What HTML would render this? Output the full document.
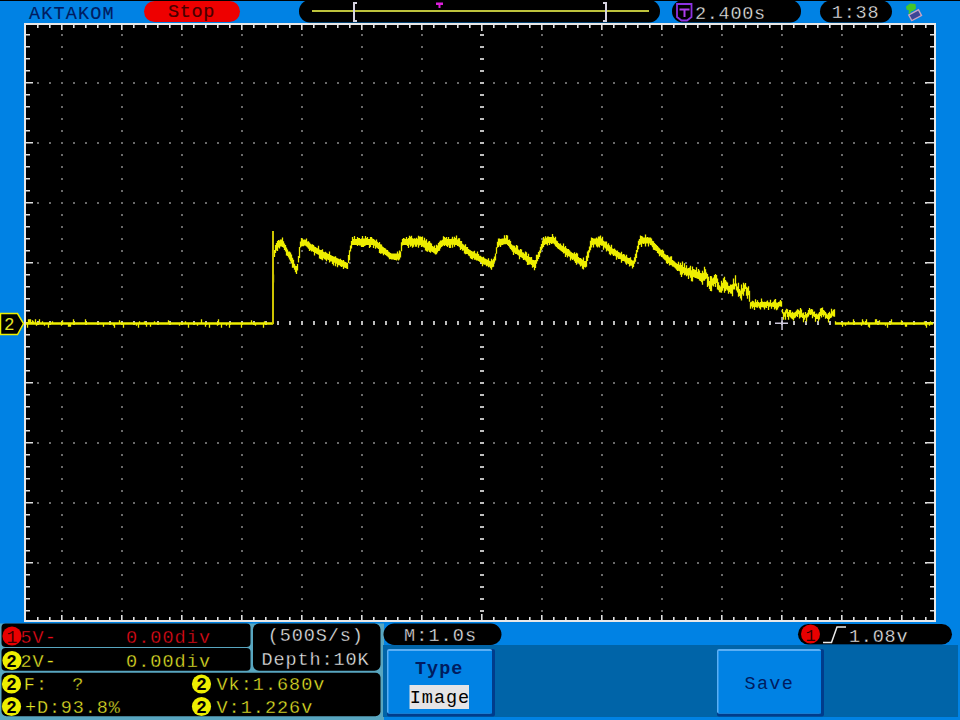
<!DOCTYPE html>
<html><head><meta charset="utf-8"><title>AKTAKOM oscilloscope</title>
<style>html,body{margin:0;padding:0;background:rgb(0,130,228);width:960px;height:720px;overflow:hidden}svg{display:block}</style>
</head><body>
<svg width="960" height="720" viewBox="0 0 960 720">
<rect width="960" height="720" fill="rgb(0,130,228)"/>
<rect x="0" y="0" width="960" height="1" fill="#000"/>
<rect x="24" y="23" width="912" height="599" fill="#e8e8e8"/>
<rect x="26" y="25" width="908" height="595" fill="#000"/>
<path d="M61 34h2v2h-2zM61 46h2v2h-2zM61 58h2v2h-2zM61 70h2v2h-2zM61 82h2v2h-2zM61 94h2v2h-2zM61 106h2v2h-2zM61 118h2v2h-2zM61 130h2v2h-2zM61 142h2v2h-2zM61 154h2v2h-2zM61 166h2v2h-2zM61 178h2v2h-2zM61 190h2v2h-2zM61 202h2v2h-2zM61 214h2v2h-2zM61 226h2v2h-2zM61 238h2v2h-2zM61 250h2v2h-2zM61 262h2v2h-2zM61 274h2v2h-2zM61 286h2v2h-2zM61 298h2v2h-2zM61 310h2v2h-2zM61 322h2v2h-2zM61 334h2v2h-2zM61 346h2v2h-2zM61 358h2v2h-2zM61 370h2v2h-2zM61 382h2v2h-2zM61 394h2v2h-2zM61 406h2v2h-2zM61 418h2v2h-2zM61 430h2v2h-2zM61 442h2v2h-2zM61 454h2v2h-2zM61 466h2v2h-2zM61 478h2v2h-2zM61 490h2v2h-2zM61 502h2v2h-2zM61 514h2v2h-2zM61 526h2v2h-2zM61 538h2v2h-2zM61 550h2v2h-2zM61 562h2v2h-2zM61 574h2v2h-2zM61 586h2v2h-2zM61 598h2v2h-2zM61 610h2v2h-2zM121 34h2v2h-2zM121 46h2v2h-2zM121 58h2v2h-2zM121 70h2v2h-2zM121 82h2v2h-2zM121 94h2v2h-2zM121 106h2v2h-2zM121 118h2v2h-2zM121 130h2v2h-2zM121 142h2v2h-2zM121 154h2v2h-2zM121 166h2v2h-2zM121 178h2v2h-2zM121 190h2v2h-2zM121 202h2v2h-2zM121 214h2v2h-2zM121 226h2v2h-2zM121 238h2v2h-2zM121 250h2v2h-2zM121 262h2v2h-2zM121 274h2v2h-2zM121 286h2v2h-2zM121 298h2v2h-2zM121 310h2v2h-2zM121 322h2v2h-2zM121 334h2v2h-2zM121 346h2v2h-2zM121 358h2v2h-2zM121 370h2v2h-2zM121 382h2v2h-2zM121 394h2v2h-2zM121 406h2v2h-2zM121 418h2v2h-2zM121 430h2v2h-2zM121 442h2v2h-2zM121 454h2v2h-2zM121 466h2v2h-2zM121 478h2v2h-2zM121 490h2v2h-2zM121 502h2v2h-2zM121 514h2v2h-2zM121 526h2v2h-2zM121 538h2v2h-2zM121 550h2v2h-2zM121 562h2v2h-2zM121 574h2v2h-2zM121 586h2v2h-2zM121 598h2v2h-2zM121 610h2v2h-2zM181 34h2v2h-2zM181 46h2v2h-2zM181 58h2v2h-2zM181 70h2v2h-2zM181 82h2v2h-2zM181 94h2v2h-2zM181 106h2v2h-2zM181 118h2v2h-2zM181 130h2v2h-2zM181 142h2v2h-2zM181 154h2v2h-2zM181 166h2v2h-2zM181 178h2v2h-2zM181 190h2v2h-2zM181 202h2v2h-2zM181 214h2v2h-2zM181 226h2v2h-2zM181 238h2v2h-2zM181 250h2v2h-2zM181 262h2v2h-2zM181 274h2v2h-2zM181 286h2v2h-2zM181 298h2v2h-2zM181 310h2v2h-2zM181 322h2v2h-2zM181 334h2v2h-2zM181 346h2v2h-2zM181 358h2v2h-2zM181 370h2v2h-2zM181 382h2v2h-2zM181 394h2v2h-2zM181 406h2v2h-2zM181 418h2v2h-2zM181 430h2v2h-2zM181 442h2v2h-2zM181 454h2v2h-2zM181 466h2v2h-2zM181 478h2v2h-2zM181 490h2v2h-2zM181 502h2v2h-2zM181 514h2v2h-2zM181 526h2v2h-2zM181 538h2v2h-2zM181 550h2v2h-2zM181 562h2v2h-2zM181 574h2v2h-2zM181 586h2v2h-2zM181 598h2v2h-2zM181 610h2v2h-2zM241 34h2v2h-2zM241 46h2v2h-2zM241 58h2v2h-2zM241 70h2v2h-2zM241 82h2v2h-2zM241 94h2v2h-2zM241 106h2v2h-2zM241 118h2v2h-2zM241 130h2v2h-2zM241 142h2v2h-2zM241 154h2v2h-2zM241 166h2v2h-2zM241 178h2v2h-2zM241 190h2v2h-2zM241 202h2v2h-2zM241 214h2v2h-2zM241 226h2v2h-2zM241 238h2v2h-2zM241 250h2v2h-2zM241 262h2v2h-2zM241 274h2v2h-2zM241 286h2v2h-2zM241 298h2v2h-2zM241 310h2v2h-2zM241 322h2v2h-2zM241 334h2v2h-2zM241 346h2v2h-2zM241 358h2v2h-2zM241 370h2v2h-2zM241 382h2v2h-2zM241 394h2v2h-2zM241 406h2v2h-2zM241 418h2v2h-2zM241 430h2v2h-2zM241 442h2v2h-2zM241 454h2v2h-2zM241 466h2v2h-2zM241 478h2v2h-2zM241 490h2v2h-2zM241 502h2v2h-2zM241 514h2v2h-2zM241 526h2v2h-2zM241 538h2v2h-2zM241 550h2v2h-2zM241 562h2v2h-2zM241 574h2v2h-2zM241 586h2v2h-2zM241 598h2v2h-2zM241 610h2v2h-2zM301 34h2v2h-2zM301 46h2v2h-2zM301 58h2v2h-2zM301 70h2v2h-2zM301 82h2v2h-2zM301 94h2v2h-2zM301 106h2v2h-2zM301 118h2v2h-2zM301 130h2v2h-2zM301 142h2v2h-2zM301 154h2v2h-2zM301 166h2v2h-2zM301 178h2v2h-2zM301 190h2v2h-2zM301 202h2v2h-2zM301 214h2v2h-2zM301 226h2v2h-2zM301 238h2v2h-2zM301 250h2v2h-2zM301 262h2v2h-2zM301 274h2v2h-2zM301 286h2v2h-2zM301 298h2v2h-2zM301 310h2v2h-2zM301 322h2v2h-2zM301 334h2v2h-2zM301 346h2v2h-2zM301 358h2v2h-2zM301 370h2v2h-2zM301 382h2v2h-2zM301 394h2v2h-2zM301 406h2v2h-2zM301 418h2v2h-2zM301 430h2v2h-2zM301 442h2v2h-2zM301 454h2v2h-2zM301 466h2v2h-2zM301 478h2v2h-2zM301 490h2v2h-2zM301 502h2v2h-2zM301 514h2v2h-2zM301 526h2v2h-2zM301 538h2v2h-2zM301 550h2v2h-2zM301 562h2v2h-2zM301 574h2v2h-2zM301 586h2v2h-2zM301 598h2v2h-2zM301 610h2v2h-2zM361 34h2v2h-2zM361 46h2v2h-2zM361 58h2v2h-2zM361 70h2v2h-2zM361 82h2v2h-2zM361 94h2v2h-2zM361 106h2v2h-2zM361 118h2v2h-2zM361 130h2v2h-2zM361 142h2v2h-2zM361 154h2v2h-2zM361 166h2v2h-2zM361 178h2v2h-2zM361 190h2v2h-2zM361 202h2v2h-2zM361 214h2v2h-2zM361 226h2v2h-2zM361 238h2v2h-2zM361 250h2v2h-2zM361 262h2v2h-2zM361 274h2v2h-2zM361 286h2v2h-2zM361 298h2v2h-2zM361 310h2v2h-2zM361 322h2v2h-2zM361 334h2v2h-2zM361 346h2v2h-2zM361 358h2v2h-2zM361 370h2v2h-2zM361 382h2v2h-2zM361 394h2v2h-2zM361 406h2v2h-2zM361 418h2v2h-2zM361 430h2v2h-2zM361 442h2v2h-2zM361 454h2v2h-2zM361 466h2v2h-2zM361 478h2v2h-2zM361 490h2v2h-2zM361 502h2v2h-2zM361 514h2v2h-2zM361 526h2v2h-2zM361 538h2v2h-2zM361 550h2v2h-2zM361 562h2v2h-2zM361 574h2v2h-2zM361 586h2v2h-2zM361 598h2v2h-2zM361 610h2v2h-2zM421 34h2v2h-2zM421 46h2v2h-2zM421 58h2v2h-2zM421 70h2v2h-2zM421 82h2v2h-2zM421 94h2v2h-2zM421 106h2v2h-2zM421 118h2v2h-2zM421 130h2v2h-2zM421 142h2v2h-2zM421 154h2v2h-2zM421 166h2v2h-2zM421 178h2v2h-2zM421 190h2v2h-2zM421 202h2v2h-2zM421 214h2v2h-2zM421 226h2v2h-2zM421 238h2v2h-2zM421 250h2v2h-2zM421 262h2v2h-2zM421 274h2v2h-2zM421 286h2v2h-2zM421 298h2v2h-2zM421 310h2v2h-2zM421 322h2v2h-2zM421 334h2v2h-2zM421 346h2v2h-2zM421 358h2v2h-2zM421 370h2v2h-2zM421 382h2v2h-2zM421 394h2v2h-2zM421 406h2v2h-2zM421 418h2v2h-2zM421 430h2v2h-2zM421 442h2v2h-2zM421 454h2v2h-2zM421 466h2v2h-2zM421 478h2v2h-2zM421 490h2v2h-2zM421 502h2v2h-2zM421 514h2v2h-2zM421 526h2v2h-2zM421 538h2v2h-2zM421 550h2v2h-2zM421 562h2v2h-2zM421 574h2v2h-2zM421 586h2v2h-2zM421 598h2v2h-2zM421 610h2v2h-2zM541 34h2v2h-2zM541 46h2v2h-2zM541 58h2v2h-2zM541 70h2v2h-2zM541 82h2v2h-2zM541 94h2v2h-2zM541 106h2v2h-2zM541 118h2v2h-2zM541 130h2v2h-2zM541 142h2v2h-2zM541 154h2v2h-2zM541 166h2v2h-2zM541 178h2v2h-2zM541 190h2v2h-2zM541 202h2v2h-2zM541 214h2v2h-2zM541 226h2v2h-2zM541 238h2v2h-2zM541 250h2v2h-2zM541 262h2v2h-2zM541 274h2v2h-2zM541 286h2v2h-2zM541 298h2v2h-2zM541 310h2v2h-2zM541 322h2v2h-2zM541 334h2v2h-2zM541 346h2v2h-2zM541 358h2v2h-2zM541 370h2v2h-2zM541 382h2v2h-2zM541 394h2v2h-2zM541 406h2v2h-2zM541 418h2v2h-2zM541 430h2v2h-2zM541 442h2v2h-2zM541 454h2v2h-2zM541 466h2v2h-2zM541 478h2v2h-2zM541 490h2v2h-2zM541 502h2v2h-2zM541 514h2v2h-2zM541 526h2v2h-2zM541 538h2v2h-2zM541 550h2v2h-2zM541 562h2v2h-2zM541 574h2v2h-2zM541 586h2v2h-2zM541 598h2v2h-2zM541 610h2v2h-2zM601 34h2v2h-2zM601 46h2v2h-2zM601 58h2v2h-2zM601 70h2v2h-2zM601 82h2v2h-2zM601 94h2v2h-2zM601 106h2v2h-2zM601 118h2v2h-2zM601 130h2v2h-2zM601 142h2v2h-2zM601 154h2v2h-2zM601 166h2v2h-2zM601 178h2v2h-2zM601 190h2v2h-2zM601 202h2v2h-2zM601 214h2v2h-2zM601 226h2v2h-2zM601 238h2v2h-2zM601 250h2v2h-2zM601 262h2v2h-2zM601 274h2v2h-2zM601 286h2v2h-2zM601 298h2v2h-2zM601 310h2v2h-2zM601 322h2v2h-2zM601 334h2v2h-2zM601 346h2v2h-2zM601 358h2v2h-2zM601 370h2v2h-2zM601 382h2v2h-2zM601 394h2v2h-2zM601 406h2v2h-2zM601 418h2v2h-2zM601 430h2v2h-2zM601 442h2v2h-2zM601 454h2v2h-2zM601 466h2v2h-2zM601 478h2v2h-2zM601 490h2v2h-2zM601 502h2v2h-2zM601 514h2v2h-2zM601 526h2v2h-2zM601 538h2v2h-2zM601 550h2v2h-2zM601 562h2v2h-2zM601 574h2v2h-2zM601 586h2v2h-2zM601 598h2v2h-2zM601 610h2v2h-2zM661 34h2v2h-2zM661 46h2v2h-2zM661 58h2v2h-2zM661 70h2v2h-2zM661 82h2v2h-2zM661 94h2v2h-2zM661 106h2v2h-2zM661 118h2v2h-2zM661 130h2v2h-2zM661 142h2v2h-2zM661 154h2v2h-2zM661 166h2v2h-2zM661 178h2v2h-2zM661 190h2v2h-2zM661 202h2v2h-2zM661 214h2v2h-2zM661 226h2v2h-2zM661 238h2v2h-2zM661 250h2v2h-2zM661 262h2v2h-2zM661 274h2v2h-2zM661 286h2v2h-2zM661 298h2v2h-2zM661 310h2v2h-2zM661 322h2v2h-2zM661 334h2v2h-2zM661 346h2v2h-2zM661 358h2v2h-2zM661 370h2v2h-2zM661 382h2v2h-2zM661 394h2v2h-2zM661 406h2v2h-2zM661 418h2v2h-2zM661 430h2v2h-2zM661 442h2v2h-2zM661 454h2v2h-2zM661 466h2v2h-2zM661 478h2v2h-2zM661 490h2v2h-2zM661 502h2v2h-2zM661 514h2v2h-2zM661 526h2v2h-2zM661 538h2v2h-2zM661 550h2v2h-2zM661 562h2v2h-2zM661 574h2v2h-2zM661 586h2v2h-2zM661 598h2v2h-2zM661 610h2v2h-2zM721 34h2v2h-2zM721 46h2v2h-2zM721 58h2v2h-2zM721 70h2v2h-2zM721 82h2v2h-2zM721 94h2v2h-2zM721 106h2v2h-2zM721 118h2v2h-2zM721 130h2v2h-2zM721 142h2v2h-2zM721 154h2v2h-2zM721 166h2v2h-2zM721 178h2v2h-2zM721 190h2v2h-2zM721 202h2v2h-2zM721 214h2v2h-2zM721 226h2v2h-2zM721 238h2v2h-2zM721 250h2v2h-2zM721 262h2v2h-2zM721 274h2v2h-2zM721 286h2v2h-2zM721 298h2v2h-2zM721 310h2v2h-2zM721 322h2v2h-2zM721 334h2v2h-2zM721 346h2v2h-2zM721 358h2v2h-2zM721 370h2v2h-2zM721 382h2v2h-2zM721 394h2v2h-2zM721 406h2v2h-2zM721 418h2v2h-2zM721 430h2v2h-2zM721 442h2v2h-2zM721 454h2v2h-2zM721 466h2v2h-2zM721 478h2v2h-2zM721 490h2v2h-2zM721 502h2v2h-2zM721 514h2v2h-2zM721 526h2v2h-2zM721 538h2v2h-2zM721 550h2v2h-2zM721 562h2v2h-2zM721 574h2v2h-2zM721 586h2v2h-2zM721 598h2v2h-2zM721 610h2v2h-2zM781 34h2v2h-2zM781 46h2v2h-2zM781 58h2v2h-2zM781 70h2v2h-2zM781 82h2v2h-2zM781 94h2v2h-2zM781 106h2v2h-2zM781 118h2v2h-2zM781 130h2v2h-2zM781 142h2v2h-2zM781 154h2v2h-2zM781 166h2v2h-2zM781 178h2v2h-2zM781 190h2v2h-2zM781 202h2v2h-2zM781 214h2v2h-2zM781 226h2v2h-2zM781 238h2v2h-2zM781 250h2v2h-2zM781 262h2v2h-2zM781 274h2v2h-2zM781 286h2v2h-2zM781 298h2v2h-2zM781 310h2v2h-2zM781 322h2v2h-2zM781 334h2v2h-2zM781 346h2v2h-2zM781 358h2v2h-2zM781 370h2v2h-2zM781 382h2v2h-2zM781 394h2v2h-2zM781 406h2v2h-2zM781 418h2v2h-2zM781 430h2v2h-2zM781 442h2v2h-2zM781 454h2v2h-2zM781 466h2v2h-2zM781 478h2v2h-2zM781 490h2v2h-2zM781 502h2v2h-2zM781 514h2v2h-2zM781 526h2v2h-2zM781 538h2v2h-2zM781 550h2v2h-2zM781 562h2v2h-2zM781 574h2v2h-2zM781 586h2v2h-2zM781 598h2v2h-2zM781 610h2v2h-2zM841 34h2v2h-2zM841 46h2v2h-2zM841 58h2v2h-2zM841 70h2v2h-2zM841 82h2v2h-2zM841 94h2v2h-2zM841 106h2v2h-2zM841 118h2v2h-2zM841 130h2v2h-2zM841 142h2v2h-2zM841 154h2v2h-2zM841 166h2v2h-2zM841 178h2v2h-2zM841 190h2v2h-2zM841 202h2v2h-2zM841 214h2v2h-2zM841 226h2v2h-2zM841 238h2v2h-2zM841 250h2v2h-2zM841 262h2v2h-2zM841 274h2v2h-2zM841 286h2v2h-2zM841 298h2v2h-2zM841 310h2v2h-2zM841 322h2v2h-2zM841 334h2v2h-2zM841 346h2v2h-2zM841 358h2v2h-2zM841 370h2v2h-2zM841 382h2v2h-2zM841 394h2v2h-2zM841 406h2v2h-2zM841 418h2v2h-2zM841 430h2v2h-2zM841 442h2v2h-2zM841 454h2v2h-2zM841 466h2v2h-2zM841 478h2v2h-2zM841 490h2v2h-2zM841 502h2v2h-2zM841 514h2v2h-2zM841 526h2v2h-2zM841 538h2v2h-2zM841 550h2v2h-2zM841 562h2v2h-2zM841 574h2v2h-2zM841 586h2v2h-2zM841 598h2v2h-2zM841 610h2v2h-2zM901 34h2v2h-2zM901 46h2v2h-2zM901 58h2v2h-2zM901 70h2v2h-2zM901 82h2v2h-2zM901 94h2v2h-2zM901 106h2v2h-2zM901 118h2v2h-2zM901 130h2v2h-2zM901 142h2v2h-2zM901 154h2v2h-2zM901 166h2v2h-2zM901 178h2v2h-2zM901 190h2v2h-2zM901 202h2v2h-2zM901 214h2v2h-2zM901 226h2v2h-2zM901 238h2v2h-2zM901 250h2v2h-2zM901 262h2v2h-2zM901 274h2v2h-2zM901 286h2v2h-2zM901 298h2v2h-2zM901 310h2v2h-2zM901 322h2v2h-2zM901 334h2v2h-2zM901 346h2v2h-2zM901 358h2v2h-2zM901 370h2v2h-2zM901 382h2v2h-2zM901 394h2v2h-2zM901 406h2v2h-2zM901 418h2v2h-2zM901 430h2v2h-2zM901 442h2v2h-2zM901 454h2v2h-2zM901 466h2v2h-2zM901 478h2v2h-2zM901 490h2v2h-2zM901 502h2v2h-2zM901 514h2v2h-2zM901 526h2v2h-2zM901 538h2v2h-2zM901 550h2v2h-2zM901 562h2v2h-2zM901 574h2v2h-2zM901 586h2v2h-2zM901 598h2v2h-2zM901 610h2v2h-2zM37 82h2v2h-2zM49 82h2v2h-2zM61 82h2v2h-2zM73 82h2v2h-2zM85 82h2v2h-2zM97 82h2v2h-2zM109 82h2v2h-2zM121 82h2v2h-2zM133 82h2v2h-2zM145 82h2v2h-2zM157 82h2v2h-2zM169 82h2v2h-2zM181 82h2v2h-2zM193 82h2v2h-2zM205 82h2v2h-2zM217 82h2v2h-2zM229 82h2v2h-2zM241 82h2v2h-2zM253 82h2v2h-2zM265 82h2v2h-2zM277 82h2v2h-2zM289 82h2v2h-2zM301 82h2v2h-2zM313 82h2v2h-2zM325 82h2v2h-2zM337 82h2v2h-2zM349 82h2v2h-2zM361 82h2v2h-2zM373 82h2v2h-2zM385 82h2v2h-2zM397 82h2v2h-2zM409 82h2v2h-2zM421 82h2v2h-2zM433 82h2v2h-2zM445 82h2v2h-2zM457 82h2v2h-2zM469 82h2v2h-2zM481 82h2v2h-2zM493 82h2v2h-2zM505 82h2v2h-2zM517 82h2v2h-2zM529 82h2v2h-2zM541 82h2v2h-2zM553 82h2v2h-2zM565 82h2v2h-2zM577 82h2v2h-2zM589 82h2v2h-2zM601 82h2v2h-2zM613 82h2v2h-2zM625 82h2v2h-2zM637 82h2v2h-2zM649 82h2v2h-2zM661 82h2v2h-2zM673 82h2v2h-2zM685 82h2v2h-2zM697 82h2v2h-2zM709 82h2v2h-2zM721 82h2v2h-2zM733 82h2v2h-2zM745 82h2v2h-2zM757 82h2v2h-2zM769 82h2v2h-2zM781 82h2v2h-2zM793 82h2v2h-2zM805 82h2v2h-2zM817 82h2v2h-2zM829 82h2v2h-2zM841 82h2v2h-2zM853 82h2v2h-2zM865 82h2v2h-2zM877 82h2v2h-2zM889 82h2v2h-2zM901 82h2v2h-2zM913 82h2v2h-2zM925 82h2v2h-2zM37 142h2v2h-2zM49 142h2v2h-2zM61 142h2v2h-2zM73 142h2v2h-2zM85 142h2v2h-2zM97 142h2v2h-2zM109 142h2v2h-2zM121 142h2v2h-2zM133 142h2v2h-2zM145 142h2v2h-2zM157 142h2v2h-2zM169 142h2v2h-2zM181 142h2v2h-2zM193 142h2v2h-2zM205 142h2v2h-2zM217 142h2v2h-2zM229 142h2v2h-2zM241 142h2v2h-2zM253 142h2v2h-2zM265 142h2v2h-2zM277 142h2v2h-2zM289 142h2v2h-2zM301 142h2v2h-2zM313 142h2v2h-2zM325 142h2v2h-2zM337 142h2v2h-2zM349 142h2v2h-2zM361 142h2v2h-2zM373 142h2v2h-2zM385 142h2v2h-2zM397 142h2v2h-2zM409 142h2v2h-2zM421 142h2v2h-2zM433 142h2v2h-2zM445 142h2v2h-2zM457 142h2v2h-2zM469 142h2v2h-2zM481 142h2v2h-2zM493 142h2v2h-2zM505 142h2v2h-2zM517 142h2v2h-2zM529 142h2v2h-2zM541 142h2v2h-2zM553 142h2v2h-2zM565 142h2v2h-2zM577 142h2v2h-2zM589 142h2v2h-2zM601 142h2v2h-2zM613 142h2v2h-2zM625 142h2v2h-2zM637 142h2v2h-2zM649 142h2v2h-2zM661 142h2v2h-2zM673 142h2v2h-2zM685 142h2v2h-2zM697 142h2v2h-2zM709 142h2v2h-2zM721 142h2v2h-2zM733 142h2v2h-2zM745 142h2v2h-2zM757 142h2v2h-2zM769 142h2v2h-2zM781 142h2v2h-2zM793 142h2v2h-2zM805 142h2v2h-2zM817 142h2v2h-2zM829 142h2v2h-2zM841 142h2v2h-2zM853 142h2v2h-2zM865 142h2v2h-2zM877 142h2v2h-2zM889 142h2v2h-2zM901 142h2v2h-2zM913 142h2v2h-2zM925 142h2v2h-2zM37 202h2v2h-2zM49 202h2v2h-2zM61 202h2v2h-2zM73 202h2v2h-2zM85 202h2v2h-2zM97 202h2v2h-2zM109 202h2v2h-2zM121 202h2v2h-2zM133 202h2v2h-2zM145 202h2v2h-2zM157 202h2v2h-2zM169 202h2v2h-2zM181 202h2v2h-2zM193 202h2v2h-2zM205 202h2v2h-2zM217 202h2v2h-2zM229 202h2v2h-2zM241 202h2v2h-2zM253 202h2v2h-2zM265 202h2v2h-2zM277 202h2v2h-2zM289 202h2v2h-2zM301 202h2v2h-2zM313 202h2v2h-2zM325 202h2v2h-2zM337 202h2v2h-2zM349 202h2v2h-2zM361 202h2v2h-2zM373 202h2v2h-2zM385 202h2v2h-2zM397 202h2v2h-2zM409 202h2v2h-2zM421 202h2v2h-2zM433 202h2v2h-2zM445 202h2v2h-2zM457 202h2v2h-2zM469 202h2v2h-2zM481 202h2v2h-2zM493 202h2v2h-2zM505 202h2v2h-2zM517 202h2v2h-2zM529 202h2v2h-2zM541 202h2v2h-2zM553 202h2v2h-2zM565 202h2v2h-2zM577 202h2v2h-2zM589 202h2v2h-2zM601 202h2v2h-2zM613 202h2v2h-2zM625 202h2v2h-2zM637 202h2v2h-2zM649 202h2v2h-2zM661 202h2v2h-2zM673 202h2v2h-2zM685 202h2v2h-2zM697 202h2v2h-2zM709 202h2v2h-2zM721 202h2v2h-2zM733 202h2v2h-2zM745 202h2v2h-2zM757 202h2v2h-2zM769 202h2v2h-2zM781 202h2v2h-2zM793 202h2v2h-2zM805 202h2v2h-2zM817 202h2v2h-2zM829 202h2v2h-2zM841 202h2v2h-2zM853 202h2v2h-2zM865 202h2v2h-2zM877 202h2v2h-2zM889 202h2v2h-2zM901 202h2v2h-2zM913 202h2v2h-2zM925 202h2v2h-2zM37 262h2v2h-2zM49 262h2v2h-2zM61 262h2v2h-2zM73 262h2v2h-2zM85 262h2v2h-2zM97 262h2v2h-2zM109 262h2v2h-2zM121 262h2v2h-2zM133 262h2v2h-2zM145 262h2v2h-2zM157 262h2v2h-2zM169 262h2v2h-2zM181 262h2v2h-2zM193 262h2v2h-2zM205 262h2v2h-2zM217 262h2v2h-2zM229 262h2v2h-2zM241 262h2v2h-2zM253 262h2v2h-2zM265 262h2v2h-2zM277 262h2v2h-2zM289 262h2v2h-2zM301 262h2v2h-2zM313 262h2v2h-2zM325 262h2v2h-2zM337 262h2v2h-2zM349 262h2v2h-2zM361 262h2v2h-2zM373 262h2v2h-2zM385 262h2v2h-2zM397 262h2v2h-2zM409 262h2v2h-2zM421 262h2v2h-2zM433 262h2v2h-2zM445 262h2v2h-2zM457 262h2v2h-2zM469 262h2v2h-2zM481 262h2v2h-2zM493 262h2v2h-2zM505 262h2v2h-2zM517 262h2v2h-2zM529 262h2v2h-2zM541 262h2v2h-2zM553 262h2v2h-2zM565 262h2v2h-2zM577 262h2v2h-2zM589 262h2v2h-2zM601 262h2v2h-2zM613 262h2v2h-2zM625 262h2v2h-2zM637 262h2v2h-2zM649 262h2v2h-2zM661 262h2v2h-2zM673 262h2v2h-2zM685 262h2v2h-2zM697 262h2v2h-2zM709 262h2v2h-2zM721 262h2v2h-2zM733 262h2v2h-2zM745 262h2v2h-2zM757 262h2v2h-2zM769 262h2v2h-2zM781 262h2v2h-2zM793 262h2v2h-2zM805 262h2v2h-2zM817 262h2v2h-2zM829 262h2v2h-2zM841 262h2v2h-2zM853 262h2v2h-2zM865 262h2v2h-2zM877 262h2v2h-2zM889 262h2v2h-2zM901 262h2v2h-2zM913 262h2v2h-2zM925 262h2v2h-2zM37 382h2v2h-2zM49 382h2v2h-2zM61 382h2v2h-2zM73 382h2v2h-2zM85 382h2v2h-2zM97 382h2v2h-2zM109 382h2v2h-2zM121 382h2v2h-2zM133 382h2v2h-2zM145 382h2v2h-2zM157 382h2v2h-2zM169 382h2v2h-2zM181 382h2v2h-2zM193 382h2v2h-2zM205 382h2v2h-2zM217 382h2v2h-2zM229 382h2v2h-2zM241 382h2v2h-2zM253 382h2v2h-2zM265 382h2v2h-2zM277 382h2v2h-2zM289 382h2v2h-2zM301 382h2v2h-2zM313 382h2v2h-2zM325 382h2v2h-2zM337 382h2v2h-2zM349 382h2v2h-2zM361 382h2v2h-2zM373 382h2v2h-2zM385 382h2v2h-2zM397 382h2v2h-2zM409 382h2v2h-2zM421 382h2v2h-2zM433 382h2v2h-2zM445 382h2v2h-2zM457 382h2v2h-2zM469 382h2v2h-2zM481 382h2v2h-2zM493 382h2v2h-2zM505 382h2v2h-2zM517 382h2v2h-2zM529 382h2v2h-2zM541 382h2v2h-2zM553 382h2v2h-2zM565 382h2v2h-2zM577 382h2v2h-2zM589 382h2v2h-2zM601 382h2v2h-2zM613 382h2v2h-2zM625 382h2v2h-2zM637 382h2v2h-2zM649 382h2v2h-2zM661 382h2v2h-2zM673 382h2v2h-2zM685 382h2v2h-2zM697 382h2v2h-2zM709 382h2v2h-2zM721 382h2v2h-2zM733 382h2v2h-2zM745 382h2v2h-2zM757 382h2v2h-2zM769 382h2v2h-2zM781 382h2v2h-2zM793 382h2v2h-2zM805 382h2v2h-2zM817 382h2v2h-2zM829 382h2v2h-2zM841 382h2v2h-2zM853 382h2v2h-2zM865 382h2v2h-2zM877 382h2v2h-2zM889 382h2v2h-2zM901 382h2v2h-2zM913 382h2v2h-2zM925 382h2v2h-2zM37 442h2v2h-2zM49 442h2v2h-2zM61 442h2v2h-2zM73 442h2v2h-2zM85 442h2v2h-2zM97 442h2v2h-2zM109 442h2v2h-2zM121 442h2v2h-2zM133 442h2v2h-2zM145 442h2v2h-2zM157 442h2v2h-2zM169 442h2v2h-2zM181 442h2v2h-2zM193 442h2v2h-2zM205 442h2v2h-2zM217 442h2v2h-2zM229 442h2v2h-2zM241 442h2v2h-2zM253 442h2v2h-2zM265 442h2v2h-2zM277 442h2v2h-2zM289 442h2v2h-2zM301 442h2v2h-2zM313 442h2v2h-2zM325 442h2v2h-2zM337 442h2v2h-2zM349 442h2v2h-2zM361 442h2v2h-2zM373 442h2v2h-2zM385 442h2v2h-2zM397 442h2v2h-2zM409 442h2v2h-2zM421 442h2v2h-2zM433 442h2v2h-2zM445 442h2v2h-2zM457 442h2v2h-2zM469 442h2v2h-2zM481 442h2v2h-2zM493 442h2v2h-2zM505 442h2v2h-2zM517 442h2v2h-2zM529 442h2v2h-2zM541 442h2v2h-2zM553 442h2v2h-2zM565 442h2v2h-2zM577 442h2v2h-2zM589 442h2v2h-2zM601 442h2v2h-2zM613 442h2v2h-2zM625 442h2v2h-2zM637 442h2v2h-2zM649 442h2v2h-2zM661 442h2v2h-2zM673 442h2v2h-2zM685 442h2v2h-2zM697 442h2v2h-2zM709 442h2v2h-2zM721 442h2v2h-2zM733 442h2v2h-2zM745 442h2v2h-2zM757 442h2v2h-2zM769 442h2v2h-2zM781 442h2v2h-2zM793 442h2v2h-2zM805 442h2v2h-2zM817 442h2v2h-2zM829 442h2v2h-2zM841 442h2v2h-2zM853 442h2v2h-2zM865 442h2v2h-2zM877 442h2v2h-2zM889 442h2v2h-2zM901 442h2v2h-2zM913 442h2v2h-2zM925 442h2v2h-2zM37 502h2v2h-2zM49 502h2v2h-2zM61 502h2v2h-2zM73 502h2v2h-2zM85 502h2v2h-2zM97 502h2v2h-2zM109 502h2v2h-2zM121 502h2v2h-2zM133 502h2v2h-2zM145 502h2v2h-2zM157 502h2v2h-2zM169 502h2v2h-2zM181 502h2v2h-2zM193 502h2v2h-2zM205 502h2v2h-2zM217 502h2v2h-2zM229 502h2v2h-2zM241 502h2v2h-2zM253 502h2v2h-2zM265 502h2v2h-2zM277 502h2v2h-2zM289 502h2v2h-2zM301 502h2v2h-2zM313 502h2v2h-2zM325 502h2v2h-2zM337 502h2v2h-2zM349 502h2v2h-2zM361 502h2v2h-2zM373 502h2v2h-2zM385 502h2v2h-2zM397 502h2v2h-2zM409 502h2v2h-2zM421 502h2v2h-2zM433 502h2v2h-2zM445 502h2v2h-2zM457 502h2v2h-2zM469 502h2v2h-2zM481 502h2v2h-2zM493 502h2v2h-2zM505 502h2v2h-2zM517 502h2v2h-2zM529 502h2v2h-2zM541 502h2v2h-2zM553 502h2v2h-2zM565 502h2v2h-2zM577 502h2v2h-2zM589 502h2v2h-2zM601 502h2v2h-2zM613 502h2v2h-2zM625 502h2v2h-2zM637 502h2v2h-2zM649 502h2v2h-2zM661 502h2v2h-2zM673 502h2v2h-2zM685 502h2v2h-2zM697 502h2v2h-2zM709 502h2v2h-2zM721 502h2v2h-2zM733 502h2v2h-2zM745 502h2v2h-2zM757 502h2v2h-2zM769 502h2v2h-2zM781 502h2v2h-2zM793 502h2v2h-2zM805 502h2v2h-2zM817 502h2v2h-2zM829 502h2v2h-2zM841 502h2v2h-2zM853 502h2v2h-2zM865 502h2v2h-2zM877 502h2v2h-2zM889 502h2v2h-2zM901 502h2v2h-2zM913 502h2v2h-2zM925 502h2v2h-2zM37 562h2v2h-2zM49 562h2v2h-2zM61 562h2v2h-2zM73 562h2v2h-2zM85 562h2v2h-2zM97 562h2v2h-2zM109 562h2v2h-2zM121 562h2v2h-2zM133 562h2v2h-2zM145 562h2v2h-2zM157 562h2v2h-2zM169 562h2v2h-2zM181 562h2v2h-2zM193 562h2v2h-2zM205 562h2v2h-2zM217 562h2v2h-2zM229 562h2v2h-2zM241 562h2v2h-2zM253 562h2v2h-2zM265 562h2v2h-2zM277 562h2v2h-2zM289 562h2v2h-2zM301 562h2v2h-2zM313 562h2v2h-2zM325 562h2v2h-2zM337 562h2v2h-2zM349 562h2v2h-2zM361 562h2v2h-2zM373 562h2v2h-2zM385 562h2v2h-2zM397 562h2v2h-2zM409 562h2v2h-2zM421 562h2v2h-2zM433 562h2v2h-2zM445 562h2v2h-2zM457 562h2v2h-2zM469 562h2v2h-2zM481 562h2v2h-2zM493 562h2v2h-2zM505 562h2v2h-2zM517 562h2v2h-2zM529 562h2v2h-2zM541 562h2v2h-2zM553 562h2v2h-2zM565 562h2v2h-2zM577 562h2v2h-2zM589 562h2v2h-2zM601 562h2v2h-2zM613 562h2v2h-2zM625 562h2v2h-2zM637 562h2v2h-2zM649 562h2v2h-2zM661 562h2v2h-2zM673 562h2v2h-2zM685 562h2v2h-2zM697 562h2v2h-2zM709 562h2v2h-2zM721 562h2v2h-2zM733 562h2v2h-2zM745 562h2v2h-2zM757 562h2v2h-2zM769 562h2v2h-2zM781 562h2v2h-2zM793 562h2v2h-2zM805 562h2v2h-2zM817 562h2v2h-2zM829 562h2v2h-2zM841 562h2v2h-2zM853 562h2v2h-2zM865 562h2v2h-2zM877 562h2v2h-2zM889 562h2v2h-2zM901 562h2v2h-2zM913 562h2v2h-2zM925 562h2v2h-2z" fill="rgb(105,105,105)"/>
<path d="M480 34h4v2h-4zM480 46h4v2h-4zM480 58h4v2h-4zM480 70h4v2h-4zM480 82h4v2h-4zM480 94h4v2h-4zM480 106h4v2h-4zM480 118h4v2h-4zM480 130h4v2h-4zM480 142h4v2h-4zM480 154h4v2h-4zM480 166h4v2h-4zM480 178h4v2h-4zM480 190h4v2h-4zM480 202h4v2h-4zM480 214h4v2h-4zM480 226h4v2h-4zM480 238h4v2h-4zM480 250h4v2h-4zM480 262h4v2h-4zM480 274h4v2h-4zM480 286h4v2h-4zM480 298h4v2h-4zM480 310h4v2h-4zM480 334h4v2h-4zM480 346h4v2h-4zM480 358h4v2h-4zM480 370h4v2h-4zM480 382h4v2h-4zM480 394h4v2h-4zM480 406h4v2h-4zM480 418h4v2h-4zM480 430h4v2h-4zM480 442h4v2h-4zM480 454h4v2h-4zM480 466h4v2h-4zM480 478h4v2h-4zM480 490h4v2h-4zM480 502h4v2h-4zM480 514h4v2h-4zM480 526h4v2h-4zM480 538h4v2h-4zM480 550h4v2h-4zM480 562h4v2h-4zM480 574h4v2h-4zM480 586h4v2h-4zM480 598h4v2h-4zM480 610h4v2h-4zM37 321h2v4h-2zM49 321h2v4h-2zM61 321h2v4h-2zM73 321h2v4h-2zM85 321h2v4h-2zM97 321h2v4h-2zM109 321h2v4h-2zM121 321h2v4h-2zM133 321h2v4h-2zM145 321h2v4h-2zM157 321h2v4h-2zM169 321h2v4h-2zM181 321h2v4h-2zM193 321h2v4h-2zM205 321h2v4h-2zM217 321h2v4h-2zM229 321h2v4h-2zM241 321h2v4h-2zM253 321h2v4h-2zM265 321h2v4h-2zM277 321h2v4h-2zM289 321h2v4h-2zM301 321h2v4h-2zM313 321h2v4h-2zM325 321h2v4h-2zM337 321h2v4h-2zM349 321h2v4h-2zM361 321h2v4h-2zM373 321h2v4h-2zM385 321h2v4h-2zM397 321h2v4h-2zM409 321h2v4h-2zM421 321h2v4h-2zM433 321h2v4h-2zM445 321h2v4h-2zM457 321h2v4h-2zM469 321h2v4h-2zM481 321h2v4h-2zM493 321h2v4h-2zM505 321h2v4h-2zM517 321h2v4h-2zM529 321h2v4h-2zM541 321h2v4h-2zM553 321h2v4h-2zM565 321h2v4h-2zM577 321h2v4h-2zM589 321h2v4h-2zM601 321h2v4h-2zM613 321h2v4h-2zM625 321h2v4h-2zM637 321h2v4h-2zM649 321h2v4h-2zM661 321h2v4h-2zM673 321h2v4h-2zM685 321h2v4h-2zM697 321h2v4h-2zM709 321h2v4h-2zM721 321h2v4h-2zM733 321h2v4h-2zM745 321h2v4h-2zM757 321h2v4h-2zM769 321h2v4h-2zM781 321h2v4h-2zM793 321h2v4h-2zM805 321h2v4h-2zM817 321h2v4h-2zM829 321h2v4h-2zM841 321h2v4h-2zM853 321h2v4h-2zM865 321h2v4h-2zM877 321h2v4h-2zM889 321h2v4h-2zM901 321h2v4h-2zM913 321h2v4h-2zM925 321h2v4h-2zM480 322h3v3h-3z" fill="rgb(190,190,190)"/>
<path d="M37 25h1.6v3h-1.6zM37 617h1.6v3h-1.6zM49 25h1.6v3h-1.6zM49 617h1.6v3h-1.6zM61 25h1.6v5h-1.6zM61 615h1.6v5h-1.6zM73 25h1.6v3h-1.6zM73 617h1.6v3h-1.6zM85 25h1.6v3h-1.6zM85 617h1.6v3h-1.6zM97 25h1.6v3h-1.6zM97 617h1.6v3h-1.6zM109 25h1.6v3h-1.6zM109 617h1.6v3h-1.6zM121 25h1.6v5h-1.6zM121 615h1.6v5h-1.6zM133 25h1.6v3h-1.6zM133 617h1.6v3h-1.6zM145 25h1.6v3h-1.6zM145 617h1.6v3h-1.6zM157 25h1.6v3h-1.6zM157 617h1.6v3h-1.6zM169 25h1.6v3h-1.6zM169 617h1.6v3h-1.6zM181 25h1.6v5h-1.6zM181 615h1.6v5h-1.6zM193 25h1.6v3h-1.6zM193 617h1.6v3h-1.6zM205 25h1.6v3h-1.6zM205 617h1.6v3h-1.6zM217 25h1.6v3h-1.6zM217 617h1.6v3h-1.6zM229 25h1.6v3h-1.6zM229 617h1.6v3h-1.6zM241 25h1.6v5h-1.6zM241 615h1.6v5h-1.6zM253 25h1.6v3h-1.6zM253 617h1.6v3h-1.6zM265 25h1.6v3h-1.6zM265 617h1.6v3h-1.6zM277 25h1.6v3h-1.6zM277 617h1.6v3h-1.6zM289 25h1.6v3h-1.6zM289 617h1.6v3h-1.6zM301 25h1.6v5h-1.6zM301 615h1.6v5h-1.6zM313 25h1.6v3h-1.6zM313 617h1.6v3h-1.6zM325 25h1.6v3h-1.6zM325 617h1.6v3h-1.6zM337 25h1.6v3h-1.6zM337 617h1.6v3h-1.6zM349 25h1.6v3h-1.6zM349 617h1.6v3h-1.6zM361 25h1.6v5h-1.6zM361 615h1.6v5h-1.6zM373 25h1.6v3h-1.6zM373 617h1.6v3h-1.6zM385 25h1.6v3h-1.6zM385 617h1.6v3h-1.6zM397 25h1.6v3h-1.6zM397 617h1.6v3h-1.6zM409 25h1.6v3h-1.6zM409 617h1.6v3h-1.6zM421 25h1.6v5h-1.6zM421 615h1.6v5h-1.6zM433 25h1.6v3h-1.6zM433 617h1.6v3h-1.6zM445 25h1.6v3h-1.6zM445 617h1.6v3h-1.6zM457 25h1.6v3h-1.6zM457 617h1.6v3h-1.6zM469 25h1.6v3h-1.6zM469 617h1.6v3h-1.6zM481 25h1.6v6h-1.6zM481 614h1.6v6h-1.6zM493 25h1.6v3h-1.6zM493 617h1.6v3h-1.6zM505 25h1.6v3h-1.6zM505 617h1.6v3h-1.6zM517 25h1.6v3h-1.6zM517 617h1.6v3h-1.6zM529 25h1.6v3h-1.6zM529 617h1.6v3h-1.6zM541 25h1.6v5h-1.6zM541 615h1.6v5h-1.6zM553 25h1.6v3h-1.6zM553 617h1.6v3h-1.6zM565 25h1.6v3h-1.6zM565 617h1.6v3h-1.6zM577 25h1.6v3h-1.6zM577 617h1.6v3h-1.6zM589 25h1.6v3h-1.6zM589 617h1.6v3h-1.6zM601 25h1.6v5h-1.6zM601 615h1.6v5h-1.6zM613 25h1.6v3h-1.6zM613 617h1.6v3h-1.6zM625 25h1.6v3h-1.6zM625 617h1.6v3h-1.6zM637 25h1.6v3h-1.6zM637 617h1.6v3h-1.6zM649 25h1.6v3h-1.6zM649 617h1.6v3h-1.6zM661 25h1.6v5h-1.6zM661 615h1.6v5h-1.6zM673 25h1.6v3h-1.6zM673 617h1.6v3h-1.6zM685 25h1.6v3h-1.6zM685 617h1.6v3h-1.6zM697 25h1.6v3h-1.6zM697 617h1.6v3h-1.6zM709 25h1.6v3h-1.6zM709 617h1.6v3h-1.6zM721 25h1.6v5h-1.6zM721 615h1.6v5h-1.6zM733 25h1.6v3h-1.6zM733 617h1.6v3h-1.6zM745 25h1.6v3h-1.6zM745 617h1.6v3h-1.6zM757 25h1.6v3h-1.6zM757 617h1.6v3h-1.6zM769 25h1.6v3h-1.6zM769 617h1.6v3h-1.6zM781 25h1.6v5h-1.6zM781 615h1.6v5h-1.6zM793 25h1.6v3h-1.6zM793 617h1.6v3h-1.6zM805 25h1.6v3h-1.6zM805 617h1.6v3h-1.6zM817 25h1.6v3h-1.6zM817 617h1.6v3h-1.6zM829 25h1.6v3h-1.6zM829 617h1.6v3h-1.6zM841 25h1.6v5h-1.6zM841 615h1.6v5h-1.6zM853 25h1.6v3h-1.6zM853 617h1.6v3h-1.6zM865 25h1.6v3h-1.6zM865 617h1.6v3h-1.6zM877 25h1.6v3h-1.6zM877 617h1.6v3h-1.6zM889 25h1.6v3h-1.6zM889 617h1.6v3h-1.6zM901 25h1.6v5h-1.6zM901 615h1.6v5h-1.6zM913 25h1.6v3h-1.6zM913 617h1.6v3h-1.6zM925 25h1.6v3h-1.6zM925 617h1.6v3h-1.6zM26 34h4v1.6h-4zM930 34h4v1.6h-4zM26 46h4v1.6h-4zM930 46h4v1.6h-4zM26 58h4v1.6h-4zM930 58h4v1.6h-4zM26 70h4v1.6h-4zM930 70h4v1.6h-4zM26 82h7v1.6h-7zM925 82h9v1.6h-9zM26 94h4v1.6h-4zM930 94h4v1.6h-4zM26 106h4v1.6h-4zM930 106h4v1.6h-4zM26 118h4v1.6h-4zM930 118h4v1.6h-4zM26 130h4v1.6h-4zM930 130h4v1.6h-4zM26 142h7v1.6h-7zM925 142h9v1.6h-9zM26 154h4v1.6h-4zM930 154h4v1.6h-4zM26 166h4v1.6h-4zM930 166h4v1.6h-4zM26 178h4v1.6h-4zM930 178h4v1.6h-4zM26 190h4v1.6h-4zM930 190h4v1.6h-4zM26 202h7v1.6h-7zM925 202h9v1.6h-9zM26 214h4v1.6h-4zM930 214h4v1.6h-4zM26 226h4v1.6h-4zM930 226h4v1.6h-4zM26 238h4v1.6h-4zM930 238h4v1.6h-4zM26 250h4v1.6h-4zM930 250h4v1.6h-4zM26 262h7v1.6h-7zM925 262h9v1.6h-9zM26 274h4v1.6h-4zM930 274h4v1.6h-4zM26 286h4v1.6h-4zM930 286h4v1.6h-4zM26 298h4v1.6h-4zM930 298h4v1.6h-4zM26 310h4v1.6h-4zM930 310h4v1.6h-4zM26 322h7v1.6h-7zM925 322h9v1.6h-9zM26 334h4v1.6h-4zM930 334h4v1.6h-4zM26 346h4v1.6h-4zM930 346h4v1.6h-4zM26 358h4v1.6h-4zM930 358h4v1.6h-4zM26 370h4v1.6h-4zM930 370h4v1.6h-4zM26 382h7v1.6h-7zM925 382h9v1.6h-9zM26 394h4v1.6h-4zM930 394h4v1.6h-4zM26 406h4v1.6h-4zM930 406h4v1.6h-4zM26 418h4v1.6h-4zM930 418h4v1.6h-4zM26 430h4v1.6h-4zM930 430h4v1.6h-4zM26 442h7v1.6h-7zM925 442h9v1.6h-9zM26 454h4v1.6h-4zM930 454h4v1.6h-4zM26 466h4v1.6h-4zM930 466h4v1.6h-4zM26 478h4v1.6h-4zM930 478h4v1.6h-4zM26 490h4v1.6h-4zM930 490h4v1.6h-4zM26 502h7v1.6h-7zM925 502h9v1.6h-9zM26 514h4v1.6h-4zM930 514h4v1.6h-4zM26 526h4v1.6h-4zM930 526h4v1.6h-4zM26 538h4v1.6h-4zM930 538h4v1.6h-4zM26 550h4v1.6h-4zM930 550h4v1.6h-4zM26 562h7v1.6h-7zM925 562h9v1.6h-9zM26 574h4v1.6h-4zM930 574h4v1.6h-4zM26 586h4v1.6h-4zM930 586h4v1.6h-4zM26 598h4v1.6h-4zM930 598h4v1.6h-4zM26 610h4v1.6h-4zM930 610h4v1.6h-4z" fill="#e0e0e0"/>
<path d="M26.5 322.3V324.7M27.5 322.3V327.7M28.5 319.3V324.7M29.5 319.3V324.7M30.5 319.3V324.7M31.5 322.3V324.7M32.5 320.3V324.7M33.5 321.3V324.7M34.5 322.3V324.7M35.5 319.3V324.7M36.5 322.3V325.7M37.5 322.3V324.7M38.5 322.3V324.7M39.5 319.3V324.7M40.5 322.3V324.7M41.5 322.3V324.7M42.5 321.3V324.7M43.5 322.3V324.7M44.5 322.3V325.7M45.5 322.3V324.7M46.5 322.3V324.7M47.5 322.3V324.7M48.5 322.3V327.7M49.5 322.3V324.7M50.5 322.3V324.7M51.5 322.3V324.7M52.5 321.3V324.7M53.5 322.3V324.7M54.5 322.3V324.7M55.5 322.3V324.7M56.5 322.3V324.7M57.5 322.3V324.7M58.5 322.3V324.7M59.5 322.3V324.7M60.5 322.3V324.7M61.5 322.3V325.7M62.5 320.3V324.7M63.5 322.3V324.7M64.5 322.3V324.7M65.5 322.3V324.7M66.5 322.3V324.7M67.5 322.3V324.7M68.5 322.3V326.7M69.5 322.3V326.7M70.5 322.3V326.7M71.5 322.3V324.7M72.5 322.3V324.7M73.5 319.3V324.7M74.5 322.3V324.7M75.5 322.3V324.7M76.5 322.3V324.7M77.5 322.3V324.7M78.5 322.3V324.7M79.5 322.3V324.7M80.5 322.3V324.7M81.5 322.3V324.7M82.5 322.3V324.7M83.5 322.3V324.7M84.5 322.3V324.7M85.5 319.3V324.7M86.5 322.3V324.7M87.5 322.3V324.7M88.5 322.3V324.7M89.5 322.3V324.7M90.5 322.3V324.7M91.5 322.3V324.7M92.5 322.3V324.7M93.5 322.3V324.7M94.5 322.3V324.7M95.5 322.3V324.7M96.5 322.3V324.7M97.5 322.3V324.7M98.5 322.3V324.7M99.5 322.3V324.7M100.5 322.3V324.7M101.5 322.3V324.7M102.5 322.3V324.7M103.5 322.3V326.7M104.5 322.3V324.7M105.5 322.3V324.7M106.5 322.3V324.7M107.5 322.3V324.7M108.5 322.3V324.7M109.5 322.3V324.7M110.5 322.3V324.7M111.5 322.3V324.7M112.5 322.3V324.7M113.5 322.3V325.7M114.5 322.3V327.7M115.5 322.3V324.7M116.5 322.3V324.7M117.5 322.3V324.7M118.5 322.3V324.7M119.5 320.3V324.7M120.5 322.3V324.7M121.5 322.3V324.7M122.5 322.3V324.7M123.5 322.3V327.7M124.5 322.3V324.7M125.5 322.3V324.7M126.5 322.3V324.7M127.5 322.3V324.7M128.5 322.3V324.7M129.5 322.3V324.7M130.5 322.3V324.7M131.5 322.3V324.7M132.5 322.3V324.7M133.5 322.3V324.7M134.5 322.3V324.7M135.5 322.3V324.7M136.5 322.3V325.7M137.5 322.3V324.7M138.5 322.3V327.7M139.5 321.3V324.7M140.5 322.3V324.7M141.5 322.3V324.7M142.5 322.3V324.7M143.5 322.3V324.7M144.5 321.3V324.7M145.5 322.3V324.7M146.5 322.3V326.7M147.5 322.3V324.7M148.5 322.3V324.7M149.5 322.3V324.7M150.5 322.3V326.7M151.5 322.3V324.7M152.5 322.3V324.7M153.5 322.3V324.7M154.5 321.3V324.7M155.5 322.3V324.7M156.5 322.3V324.7M157.5 322.3V324.7M158.5 322.3V324.7M159.5 322.3V324.7M160.5 322.3V324.7M161.5 322.3V324.7M162.5 322.3V324.7M163.5 322.3V324.7M164.5 322.3V324.7M165.5 322.3V324.7M166.5 322.3V324.7M167.5 322.3V324.7M168.5 320.3V324.7M169.5 322.3V324.7M170.5 322.3V324.7M171.5 322.3V324.7M172.5 322.3V324.7M173.5 322.3V324.7M174.5 322.3V324.7M175.5 322.3V324.7M176.5 322.3V324.7M177.5 322.3V324.7M178.5 322.3V324.7M179.5 322.3V325.7M180.5 322.3V324.7M181.5 322.3V324.7M182.5 322.3V324.7M183.5 322.3V324.7M184.5 322.3V324.7M185.5 321.3V324.7M186.5 322.3V324.7M187.5 322.3V324.7M188.5 322.3V327.7M189.5 322.3V324.7M190.5 322.3V324.7M191.5 322.3V324.7M192.5 322.3V324.7M193.5 322.3V324.7M194.5 322.3V324.7M195.5 322.3V324.7M196.5 322.3V324.7M197.5 322.3V325.7M198.5 322.3V324.7M199.5 322.3V324.7M200.5 322.3V324.7M201.5 319.3V324.7M202.5 322.3V324.7M203.5 322.3V324.7M204.5 322.3V324.7M205.5 322.3V326.7M206.5 322.3V324.7M207.5 322.3V324.7M208.5 322.3V324.7M209.5 322.3V327.7M210.5 322.3V324.7M211.5 322.3V324.7M212.5 322.3V324.7M213.5 322.3V324.7M214.5 322.3V324.7M215.5 322.3V324.7M216.5 322.3V324.7M217.5 322.3V325.7M218.5 319.3V324.7M219.5 322.3V324.7M220.5 322.3V324.7M221.5 322.3V327.7M222.5 322.3V324.7M223.5 322.3V324.7M224.5 322.3V324.7M225.5 322.3V324.7M226.5 322.3V325.7M227.5 322.3V324.7M228.5 322.3V324.7M229.5 322.3V327.7M230.5 322.3V324.7M231.5 322.3V324.7M232.5 322.3V324.7M233.5 322.3V324.7M234.5 322.3V324.7M235.5 322.3V324.7M236.5 322.3V324.7M237.5 322.3V324.7M238.5 322.3V324.7M239.5 322.3V324.7M240.5 322.3V324.7M241.5 322.3V327.7M242.5 322.3V324.7M243.5 322.3V324.7M244.5 322.3V324.7M245.5 322.3V324.7M246.5 322.3V324.7M247.5 322.3V324.7M248.5 322.3V324.7M249.5 322.3V324.7M250.5 322.3V324.7M251.5 320.3V324.7M252.5 322.3V324.7M253.5 322.3V324.7M254.5 322.3V324.7M255.5 322.3V325.7M256.5 322.3V324.7M257.5 322.3V324.7M258.5 322.3V324.7M259.5 322.3V324.7M260.5 322.3V324.7M261.5 322.3V324.7M262.5 322.3V324.7M263.5 322.3V327.7M264.5 321.3V324.7M265.5 322.3V324.7M266.5 322.3V324.7M267.5 322.3V324.7M268.5 322.3V324.7M269.5 322.3V324.7M270.5 322.3V324.7M271.5 322.3V324.7M272.5 322.3V324.7M273.5 274.5V282.5M274.5 250.0V257.0M275.5 244.9V252.9M276.5 243.0V250.5M277.5 241.0V251.0M278.5 240.0V247.5M279.5 240.5V248.5M280.5 239.5V246.5M281.5 239.5V246.5M282.5 237.5V247.0M283.5 241.3V247.8M284.5 243.4V249.9M285.5 244.9V251.4M286.5 247.4V255.4M287.5 249.5V256.0M288.5 251.5V257.5M289.5 251.5V259.5M290.5 252.6V261.6M291.5 254.6V263.6M292.5 257.7V267.7M293.5 259.7V267.7M294.5 263.7V269.7M295.5 265.8V272.3M296.5 266.1V274.1M297.5 264.0V270.5M298.5 256.0V262.5M299.5 247.0V258.0M300.5 241.5V247.5M301.5 237.9V246.4M302.5 238.8V246.3M303.5 239.7V246.2M304.5 239.6V245.6M305.5 239.8V245.8M306.5 238.6V246.6M307.5 241.4V247.4M308.5 241.2V248.7M309.5 242.5V251.0M310.5 243.8V250.3M311.5 244.6V251.6M312.5 244.3V251.3M313.5 244.9V251.9M314.5 246.5V255.5M315.5 247.1V253.1M316.5 247.7V253.7M317.5 248.3V254.3M318.5 245.8V254.8M319.5 249.4V258.4M320.5 250.0V259.0M321.5 250.1V259.6M322.5 249.2V260.2M323.5 251.8V258.3M324.5 252.3V259.3M325.5 251.7V259.7M326.5 252.7V261.2M327.5 253.6V259.6M328.5 254.1V260.1M329.5 251.5V262.5M330.5 255.0V261.5M331.5 255.4V261.4M332.5 255.9V263.9M333.5 256.4V265.4M334.5 256.8V262.8M335.5 256.3V266.3M336.5 257.8V263.8M337.5 258.2V267.2M338.5 258.7V265.2M339.5 259.2V265.2M340.5 258.7V266.2M341.5 260.1V267.1M342.5 260.6V266.6M343.5 260.1V269.1M344.5 261.6V267.6M345.5 262.0V268.0M346.5 262.5V268.5M347.5 263.0V269.0M348.5 255.1V263.1M349.5 250.2V260.2M350.5 245.4V251.4M351.5 241.0V248.5M352.5 237.0V245.0M353.5 239.0V245.0M354.5 236.0V245.0M355.5 239.0V245.0M356.5 239.0V245.0M357.5 237.0V246.0M358.5 238.0V245.0M359.5 238.0V245.5M360.5 239.0V245.5M361.5 239.0V247.0M362.5 236.0V247.0M363.5 238.5V247.0M364.5 238.5V246.0M365.5 236.0V245.5M366.5 238.0V245.0M367.5 237.0V245.0M368.5 239.0V245.0M369.5 239.0V248.0M370.5 237.0V247.0M371.5 237.0V245.0M372.5 238.5V245.0M373.5 239.0V248.0M374.5 239.8V245.8M375.5 240.7V248.7M376.5 239.5V247.5M377.5 241.8V248.3M378.5 243.1V249.1M379.5 242.0V253.0M380.5 244.3V253.8M381.5 244.6V253.6M382.5 246.5V253.5M383.5 247.3V255.3M384.5 248.1V254.1M385.5 248.4V254.9M386.5 249.8V255.8M387.5 250.1V256.6M388.5 251.4V257.4M389.5 252.3V259.3M390.5 253.1V259.1M391.5 253.5V259.5M392.5 253.5V259.5M393.5 253.5V259.5M394.5 253.5V260.0M395.5 253.5V260.0M396.5 253.5V260.5M397.5 251.5V259.5M398.5 253.5V260.5M399.5 250.5V259.5M400.5 251.6V257.6M401.5 242.3V251.3M402.5 239.0V245.5M403.5 238.0V245.0M404.5 238.5V245.0M405.5 238.9V244.9M406.5 236.9V244.9M407.5 238.9V245.9M408.5 237.9V247.9M409.5 235.8V244.8M410.5 236.8V246.8M411.5 235.8V245.8M412.5 238.3V247.8M413.5 238.8V246.8M414.5 238.2V244.7M415.5 238.7V246.7M416.5 237.7V246.7M417.5 238.7V244.7M418.5 235.7V247.7M419.5 236.6V245.6M420.5 236.6V245.1M421.5 236.9V246.9M422.5 236.5V246.5M423.5 240.2V247.2M424.5 237.8V247.8M425.5 240.5V250.5M426.5 239.2V251.2M427.5 242.8V251.8M428.5 241.5V250.5M429.5 241.1V252.1M430.5 242.8V252.8M431.5 243.4V251.4M432.5 246.1V252.1M433.5 246.8V252.8M434.5 245.4V253.4M435.5 248.1V254.6M436.5 244.7V254.2M437.5 245.4V252.4M438.5 243.1V251.1M439.5 241.7V250.7M440.5 240.4V248.4M441.5 240.6V247.1M442.5 239.7V246.2M443.5 236.2V245.2M444.5 237.1V246.1M445.5 238.1V245.1M446.5 237.0V246.0M447.5 239.0V247.0M448.5 237.0V245.5M449.5 238.9V247.9M450.5 238.9V247.9M451.5 238.8V244.8M452.5 236.8V247.8M453.5 238.7V244.7M454.5 236.7V246.7M455.5 238.1V245.1M456.5 235.6V245.1M457.5 239.5V246.0M458.5 238.3V246.3M459.5 238.2V247.2M460.5 241.0V250.0M461.5 240.9V248.9M462.5 243.7V250.7M463.5 244.6V250.6M464.5 245.4V253.4M465.5 244.3V254.3M466.5 247.1V254.1M467.5 247.0V254.0M468.5 248.9V255.4M469.5 249.7V256.2M470.5 250.3V258.3M471.5 250.9V258.9M472.5 251.5V259.5M473.5 251.6V258.1M474.5 250.7V259.7M475.5 253.3V259.8M476.5 253.4V260.4M477.5 251.5V260.5M478.5 254.1V261.1M479.5 255.7V261.7M480.5 255.8V262.3M481.5 256.8V263.3M482.5 257.3V266.3M483.5 256.8V264.3M484.5 258.3V264.8M485.5 258.7V264.7M486.5 259.2V266.2M487.5 259.7V265.7M488.5 258.2V267.2M489.5 260.7V266.7M490.5 261.2V268.2M491.5 258.7V269.7M492.5 260.3V267.3M493.5 258.8V266.8M494.5 256.4V262.4M495.5 253.5V260.5M496.5 247.3V253.8M497.5 241.7V247.7M498.5 238.6V247.1M499.5 238.5V245.5M500.5 238.9V246.9M501.5 238.7V245.2M502.5 238.6V245.1M503.5 238.5V244.5M504.5 235.3V244.3M505.5 238.2V244.2M506.5 235.1V244.1M507.5 235.6V245.1M508.5 240.0V246.0M509.5 239.4V247.4M510.5 240.9V248.9M511.5 244.3V250.3M512.5 245.3V251.8M513.5 245.5V255.0M514.5 245.7V252.7M515.5 247.4V253.9M516.5 245.1V254.1M517.5 245.8V254.8M518.5 249.5V255.5M519.5 250.2V259.2M520.5 248.9V256.9M521.5 249.6V257.6M522.5 252.3V258.3M523.5 252.5V260.0M524.5 253.7V259.7M525.5 251.5V260.5M526.5 252.2V261.7M527.5 256.0V265.0M528.5 253.7V264.7M529.5 257.0V264.5M530.5 257.2V264.2M531.5 257.0V265.0M532.5 259.7V267.7M533.5 260.0V267.0M534.5 260.2V270.2M535.5 260.1V268.1M536.5 254.7V263.7M537.5 254.8V261.3M538.5 252.0V259.0M539.5 250.6V257.1M540.5 246.7V253.2M541.5 243.9V249.9M542.5 240.5V248.5M543.5 237.0V247.0M544.5 238.6V245.1M545.5 236.2V244.2M546.5 237.8V244.3M547.5 236.4V245.4M548.5 236.5V243.0M549.5 237.0V245.0M550.5 237.0V243.0M551.5 237.0V244.0M552.5 234.0V243.5M553.5 236.4V243.4M554.5 238.1V244.6M555.5 236.8V246.3M556.5 240.5V247.0M557.5 241.2V248.2M558.5 243.1V249.1M559.5 243.8V249.8M560.5 243.5V250.5M561.5 245.2V251.2M562.5 245.9V251.9M563.5 243.6V253.6M564.5 247.3V253.3M565.5 246.0V257.0M566.5 248.2V255.2M567.5 248.9V257.4M568.5 249.1V256.1M569.5 250.3V256.8M570.5 251.5V260.5M571.5 252.2V258.7M572.5 252.9V259.9M573.5 253.6V259.6M574.5 252.3V261.3M575.5 254.0V263.0M576.5 252.7V264.7M577.5 253.4V262.4M578.5 257.1V263.1M579.5 257.9V264.4M580.5 258.1V266.6M581.5 258.7V265.7M582.5 259.8V268.8M583.5 257.4V269.4M584.5 261.0V267.0M585.5 260.9V267.4M586.5 255.7V266.7M587.5 251.4V260.9M588.5 250.2V257.7M589.5 246.4V252.4M590.5 240.7V250.2M591.5 237.6V247.6M592.5 238.1V245.1M593.5 238.6V247.6M594.5 238.6V244.6M595.5 238.6V244.6M596.5 237.6V246.6M597.5 238.6V247.6M598.5 236.6V246.6M599.5 236.6V247.6M600.5 235.6V245.1M601.5 238.8V245.8M602.5 236.7V245.7M603.5 240.7V249.7M604.5 241.6V247.6M605.5 241.5V248.5M606.5 241.5V251.5M607.5 244.4V250.4M608.5 243.3V251.3M609.5 245.3V254.3M610.5 246.7V255.2M611.5 244.8V253.8M612.5 248.4V254.4M613.5 249.0V256.0M614.5 248.6V255.6M615.5 249.7V256.2M616.5 250.8V259.8M617.5 250.4V257.4M618.5 252.0V259.0M619.5 252.6V259.1M620.5 253.2V259.2M621.5 251.8V262.8M622.5 254.4V260.9M623.5 254.0V261.0M624.5 254.6V261.6M625.5 256.2V262.7M626.5 254.8V264.8M627.5 257.4V263.4M628.5 258.0V264.0M629.5 258.1V266.6M630.5 257.2V265.7M631.5 259.8V265.8M632.5 260.4V268.4M633.5 260.5V267.0M634.5 257.3V263.8M635.5 253.7V261.7M636.5 250.0V258.0M637.5 245.8V252.3M638.5 240.7V249.2M639.5 239.0V245.0M640.5 235.5V244.5M641.5 235.9V246.9M642.5 236.4V243.4M643.5 237.4V243.9M644.5 237.4V243.4M645.5 234.4V246.4M646.5 237.4V243.4M647.5 236.9V243.4M648.5 237.4V246.4M649.5 237.4V243.4M650.5 237.5V245.0M651.5 238.6V245.6M652.5 240.7V247.2M653.5 241.3V249.8M654.5 242.9V249.9M655.5 243.9V250.4M656.5 245.0V251.0M657.5 246.1V253.1M658.5 247.2V253.7M659.5 248.3V256.3M660.5 249.4V255.4M661.5 250.0V257.0M662.5 249.6V257.6M663.5 250.7V258.7M664.5 253.7V259.7M665.5 254.5V260.5M666.5 255.3V263.3M667.5 255.1V264.1M668.5 256.4V262.9M669.5 257.6V265.6M670.5 256.4V264.9M671.5 256.2V265.2M672.5 260.0V266.5M673.5 260.8V266.8M674.5 261.6V267.6M675.5 262.4V268.4M676.5 263.2V269.7M677.5 264.0V271.0M678.5 261.8V270.8M679.5 264.8V271.3M680.5 262.7V274.7M681.5 265.1V277.1M682.5 261.5V274.5M683.5 266.9V272.9M684.5 263.3V275.3M685.5 267.8V274.8M686.5 265.2V276.2M687.5 268.6V275.6M688.5 268.0V279.0M689.5 267.4V275.4M690.5 265.8V277.8M691.5 270.2V281.2M692.5 266.6V281.6M693.5 269.0V277.0M694.5 269.5V277.5M695.5 269.9V277.9M696.5 267.3V278.3M697.5 271.7V278.7M698.5 269.1V279.1M699.5 270.5V280.5M700.5 272.9V280.9M701.5 273.2V282.2M702.5 270.8V284.8M703.5 272.8V280.8M704.5 266.7V280.7M705.5 269.2V279.2M706.5 272.6V278.6M707.5 273.9V286.9M708.5 276.7V285.7M709.5 281.0V289.0M710.5 276.1V291.1M711.5 276.3V291.3M712.5 278.6V285.6M713.5 277.6V286.6M714.5 275.1V284.1M715.5 274.1V287.1M716.5 275.1V283.1M717.5 278.6V289.6M718.5 282.3V290.3M719.5 285.3V292.3M720.5 286.5V292.5M721.5 280.7V292.7M722.5 282.8V290.8M723.5 278.3V288.3M724.5 276.8V292.8M725.5 280.1V291.1M726.5 281.4V289.4M727.5 282.4V290.4M728.5 285.7V293.7M729.5 286.1V292.1M730.5 284.6V293.6M731.5 284.7V293.7M732.5 284.3V296.3M733.5 278.6V289.6M734.5 283.5V289.5M735.5 275.2V286.2M736.5 283.5V290.5M737.5 286.4V292.4M738.5 282.7V296.7M739.5 289.0V296.0M740.5 290.6V298.6M741.5 284.5V300.5M742.5 288.2V294.2M743.5 282.7V295.7M744.5 284.4V291.4M745.5 283.0V289.0M746.5 286.7V295.7M747.5 287.7V298.7M748.5 286.3V295.3M749.5 290.8V301.8M750.5 302.2V308.8M751.5 301.8V306.4M752.5 300.8V308.4M753.5 301.3V306.9M754.5 302.5V310.1M755.5 299.3V306.9M756.5 302.0V307.6M757.5 300.2V307.8M758.5 302.0V306.6M759.5 302.7V308.3M760.5 302.0V309.6M761.5 298.6V307.2M762.5 301.6V307.2M763.5 302.0V307.6M764.5 301.8V309.4M765.5 302.0V307.6M766.5 301.5V308.1M767.5 300.5V306.1M768.5 302.3V309.9M769.5 302.2V306.8M770.5 299.8V306.4M771.5 303.1V308.7M772.5 302.2V306.8M773.5 301.5V307.1M774.5 299.8V309.4M775.5 299.0V308.6M776.5 302.6V310.2M777.5 302.8V309.4M778.5 302.0V307.6M779.5 301.6V306.2M780.5 300.0V306.6M781.5 301.2V306.8M782.5 308.9V313.5M783.5 312.2V319.8M784.5 312.2V316.8M785.5 310.2V319.8M786.5 308.8V313.4M787.5 309.3V316.9M788.5 312.1V319.7M789.5 310.0V316.6M790.5 309.9V317.5M791.5 312.8V318.4M792.5 311.7V319.3M793.5 312.8V320.4M794.5 312.6V318.2M795.5 311.8V317.4M796.5 310.5V316.1M797.5 309.3V316.9M798.5 309.7V314.3M799.5 310.8V318.4M800.5 308.0V317.6M801.5 309.4V317.0M802.5 313.3V317.9M803.5 312.6V322.2M804.5 315.1V319.7M805.5 312.1V317.7M806.5 313.9V321.5M807.5 312.8V317.4M808.5 310.0V316.6M809.5 307.9V314.5M810.5 309.5V315.1M811.5 309.0V314.6M812.5 309.6V318.2M813.5 311.7V316.3M814.5 311.4V317.0M815.5 314.1V321.7M816.5 313.4V319.0M817.5 314.5V319.1M818.5 313.6V321.2M819.5 311.9V319.5M820.5 308.4V316.0M821.5 308.0V317.6M822.5 307.4V315.0M823.5 310.1V316.7M824.5 310.7V315.3M825.5 312.1V318.7M826.5 313.5V318.1M827.5 314.5V319.1M828.5 313.0V322.6M829.5 311.7V319.3M830.5 313.5V318.1M831.5 308.8V317.4M832.5 311.2V315.8M833.5 309.8V316.4M834.5 309.2V316.8M835.5 321.3V324.7M836.5 322.3V324.7M837.5 322.3V324.7M838.5 322.3V324.7M839.5 322.3V324.7M840.5 322.3V324.7M841.5 322.3V324.7M842.5 322.3V326.7M843.5 322.3V324.7M844.5 322.3V324.7M845.5 322.3V325.7M846.5 322.3V324.7M847.5 322.3V324.7M848.5 321.3V324.7M849.5 322.3V324.7M850.5 322.3V324.7M851.5 322.3V324.7M852.5 322.3V324.7M853.5 319.3V324.7M854.5 322.3V324.7M855.5 322.3V324.7M856.5 322.3V324.7M857.5 322.3V324.7M858.5 322.3V324.7M859.5 322.3V324.7M860.5 322.3V324.7M861.5 322.3V325.7M862.5 319.3V324.7M863.5 321.3V324.7M864.5 322.3V324.7M865.5 321.3V324.7M866.5 319.3V324.7M867.5 322.3V324.7M868.5 322.3V326.7M869.5 322.3V327.7M870.5 322.3V324.7M871.5 322.3V324.7M872.5 322.3V324.7M873.5 322.3V324.7M874.5 322.3V324.7M875.5 319.3V324.7M876.5 319.3V324.7M877.5 322.3V324.7M878.5 322.3V324.7M879.5 320.3V324.7M880.5 322.3V324.7M881.5 322.3V324.7M882.5 322.3V324.7M883.5 322.3V324.7M884.5 322.3V324.7M885.5 322.3V325.7M886.5 322.3V324.7M887.5 322.3V327.7M888.5 322.3V324.7M889.5 322.3V324.7M890.5 322.3V324.7M891.5 319.3V324.7M892.5 322.3V324.7M893.5 322.3V324.7M894.5 322.3V324.7M895.5 322.3V324.7M896.5 322.3V324.7M897.5 322.3V324.7M898.5 322.3V324.7M899.5 322.3V324.7M900.5 322.3V324.7M901.5 320.3V324.7M902.5 322.3V324.7M903.5 322.3V324.7M904.5 322.3V324.7M905.5 322.3V326.7M906.5 322.3V326.7M907.5 322.3V324.7M908.5 322.3V324.7M909.5 322.3V324.7M910.5 322.3V324.7M911.5 322.3V324.7M912.5 322.3V324.7M913.5 322.3V324.7M914.5 322.3V324.7M915.5 322.3V324.7M916.5 322.3V324.7M917.5 322.3V324.7M918.5 322.3V324.7M919.5 322.3V324.7M920.5 322.3V324.7M921.5 322.3V324.7M922.5 322.3V324.7M923.5 322.3V324.7M924.5 321.3V324.7M925.5 322.3V325.7M926.5 322.3V327.7M927.5 322.3V324.7M928.5 322.3V324.7M929.5 322.3V325.7M930.5 321.3V324.7M931.5 322.3V324.7M932.5 322.3V324.7" stroke="rgb(238,238,0)" stroke-width="1.3" fill="none"/>
<rect x="272" y="231" width="2" height="93" fill="rgb(205,195,0)"/>
<path d="M775 322.5h13v1.5h-13zM781.3 317h1.5v13h-1.5z" fill="rgb(205,200,220)"/>
<path d="M0.5 313.5H17.5L23.5 323.5L17.5 334.5H0.5Z" fill="#000" stroke="rgb(238,238,0)" stroke-width="1.5"/>
<text x="4" y="330" style='font-family:"Liberation Mono", monospace;font-size:17.5px;letter-spacing:0px;font-weight:normal' fill="rgb(230,230,40)" >2</text>
<text x="29" y="18.7" style='font-family:"Liberation Mono", monospace;font-size:18.5px;letter-spacing:1.15px;font-weight:normal' fill="rgb(0,28,95)" stroke="rgb(0,28,95)" stroke-width="0.15">AKTAKOM</text>
<rect x="144" y="1" width="96" height="21" rx="10.5" fill="rgb(238,0,0)"/>
<text x="168.1" y="17" style='font-family:"Liberation Mono", monospace;font-size:18.5px;letter-spacing:0.65px;font-weight:normal' fill="rgb(70,0,0)" stroke="rgb(70,0,0)" stroke-width="0.2">Stop</text>
<rect x="299" y="0" width="361" height="22.5" rx="11" fill="#000"/>
<rect x="312" y="10" width="337" height="2" fill="rgb(190,195,60)"/>
<path d="M353 2h4v2h-2v16h2v2h-4z" fill="rgb(215,212,225)"/>
<path d="M607 2h-4v2h2v16h-2v2h4z" fill="rgb(215,212,225)"/>
<path d="M436 2.5h7v2.5h-2.5v3h-2v-3h-2.5z" fill="rgb(220,30,220)"/>
<rect x="672" y="0" width="129" height="22.5" rx="11" fill="#000"/>
<path d="M677 4H691.5V17L687 20.5H681.5L677 17Z" fill="none" stroke="rgb(140,50,225)" stroke-width="1.8"/>
<path d="M679.5 8.5h10v2h-4v6.5h-2v-6.5h-4z" fill="rgb(175,60,235)"/>
<text x="695" y="18.8" style='font-family:"Liberation Mono", monospace;font-size:18.5px;letter-spacing:0.7px;font-weight:normal' fill="rgb(235,235,235)" stroke="#000" stroke-width="0.35" >2.400s</text>
<rect x="820" y="0.5" width="72" height="22" rx="11" fill="#000"/>
<text x="831.8" y="17.6" style='font-family:"Liberation Mono", monospace;font-size:18.5px;letter-spacing:0.8px;font-weight:normal' fill="rgb(235,235,235)" stroke="#000" stroke-width="0.35" >1:38</text>
<g transform="translate(915,15) rotate(-28)"><rect x="-5.5" y="-3" width="11" height="6.5" fill="rgb(60,70,150)" stroke="rgb(200,165,195)" stroke-width="1.4"/></g><path d="M906 6.5 L910 3.5 L915.5 4 L916 8.5 L913 11 L911 11.5 L910 14 L908.5 13.5 L909 10.5 L906.5 9.5Z" fill="rgb(70,200,40)"/>
<rect x="0" y="622" width="384" height="98" fill="rgb(88,166,192)"/>
<rect x="0" y="622" width="384" height="1.5" fill="rgb(0,130,228)"/>
<rect x="1.5" y="623.5" width="249" height="23.5" rx="4" fill="#000"/>
<rect x="1.5" y="648" width="249" height="22.8" rx="4" fill="#000"/>
<rect x="253" y="623.5" width="127.5" height="47.3" rx="6" fill="#000"/>
<rect x="1.5" y="672.8" width="379" height="43.4" rx="5" fill="#000"/>
<rect x="383" y="645" width="575" height="72" fill="rgb(0,100,168)"/>
<rect x="383.5" y="623.5" width="118" height="21.5" rx="10.75" fill="#000"/>
<text x="404" y="640.8" style='font-family:"Liberation Mono", monospace;font-size:18.5px;letter-spacing:1.1px;font-weight:normal' fill="rgb(235,235,235)" stroke="#000" stroke-width="0.35" >M:1.0s</text>
<rect x="798" y="624" width="154" height="20.5" rx="10.25" fill="#000"/>
<circle cx="810.5" cy="634" r="9.5" fill="rgb(232,0,0)"/>
<text x="805.5" y="641" style='font-family:"Liberation Mono", monospace;font-size:17px;letter-spacing:0px;font-weight:normal' fill="rgb(50,0,0)" >1</text>
<path d="M823 642.5H831.5L837 627H846" fill="none" stroke="rgb(235,235,235)" stroke-width="1.5"/>
<text x="849" y="642" style='font-family:"Liberation Mono", monospace;font-size:18.5px;letter-spacing:0.75px;font-weight:normal' fill="rgb(235,235,235)" stroke="#000" stroke-width="0.35" >1.08v</text>
<circle cx="12" cy="636" r="9.6" fill="rgb(232,0,0)"/>
<text x="6.5" y="642.5" style='font-family:"Liberation Mono", monospace;font-size:18px;letter-spacing:0px;font-weight:normal' fill="rgb(60,0,0)" >1</text>
<text x="20.5" y="642.6" style='font-family:"Liberation Mono", monospace;font-size:18.5px;letter-spacing:1.0px;font-weight:normal' fill="rgb(232,12,25)" stroke="#000" stroke-width="0.35" >5V-</text>
<text x="126" y="643.3" style='font-family:"Liberation Mono", monospace;font-size:18.5px;letter-spacing:1.05px;font-weight:normal' fill="rgb(232,12,25)" stroke="#000" stroke-width="0.35" >0.00div</text>
<circle cx="12" cy="660.5" r="9.6" fill="rgb(238,238,0)"/>
<text x="6.3" y="666.7" style='font-family:"Liberation Mono", monospace;font-size:17.5px;letter-spacing:0px;font-weight:bold' fill="#000" >2</text>
<text x="20.5" y="667" style='font-family:"Liberation Mono", monospace;font-size:18.5px;letter-spacing:1.0px;font-weight:normal' fill="rgb(230,230,40)" stroke="#000" stroke-width="0.35" >2V-</text>
<text x="126" y="667.3" style='font-family:"Liberation Mono", monospace;font-size:18.5px;letter-spacing:1.05px;font-weight:normal' fill="rgb(230,230,40)" stroke="#000" stroke-width="0.35" >0.00div</text>
<text x="267.8" y="640.8" style='font-family:"Liberation Mono", monospace;font-size:18.5px;letter-spacing:0.9px;font-weight:normal' fill="rgb(235,235,235)" stroke="#000" stroke-width="0.35" >(500S/s)</text>
<text x="261.5" y="664.5" style='font-family:"Liberation Mono", monospace;font-size:18.5px;letter-spacing:0.9px;font-weight:normal' fill="rgb(235,235,235)" stroke="#000" stroke-width="0.35" >Depth:10K</text>
<circle cx="11.5" cy="684" r="9.6" fill="rgb(238,238,0)"/>
<text x="6.3" y="690.2" style='font-family:"Liberation Mono", monospace;font-size:17.5px;letter-spacing:0px;font-weight:bold' fill="#000" >2</text>
<circle cx="11.5" cy="706.5" r="9.6" fill="rgb(238,238,0)"/>
<text x="6.3" y="712.7" style='font-family:"Liberation Mono", monospace;font-size:17.5px;letter-spacing:0px;font-weight:bold' fill="#000" >2</text>
<circle cx="201.5" cy="684" r="9.6" fill="rgb(238,238,0)"/>
<text x="196.3" y="690.2" style='font-family:"Liberation Mono", monospace;font-size:17.5px;letter-spacing:0px;font-weight:bold' fill="#000" >2</text>
<circle cx="201.5" cy="706.5" r="9.6" fill="rgb(238,238,0)"/>
<text x="196.3" y="712.7" style='font-family:"Liberation Mono", monospace;font-size:17.5px;letter-spacing:0px;font-weight:bold' fill="#000" >2</text>
<text x="23.8" y="689.5" style='font-family:"Liberation Mono", monospace;font-size:18.5px;letter-spacing:1.0px;font-weight:normal' fill="rgb(230,230,40)" stroke="#000" stroke-width="0.35" >F:&#160;&#160;?</text>
<text x="25" y="712.8" style='font-family:"Liberation Mono", monospace;font-size:18.5px;letter-spacing:0.85px;font-weight:normal' fill="rgb(230,230,40)" stroke="#000" stroke-width="0.35" >+D:93.8%</text>
<text x="216.5" y="690.2" style='font-family:"Liberation Mono", monospace;font-size:18.5px;letter-spacing:1.0px;font-weight:normal' fill="rgb(230,230,40)" stroke="#000" stroke-width="0.35" >Vk:1.680v</text>
<text x="216.5" y="712.8" style='font-family:"Liberation Mono", monospace;font-size:18.5px;letter-spacing:1.0px;font-weight:normal' fill="rgb(230,230,40)" stroke="#000" stroke-width="0.35" >V:1.226v</text>
<rect x="387" y="649" width="108" height="67.5" rx="2" fill="rgb(0,60,140)"/>
<rect x="387" y="649" width="105" height="64.5" rx="2" fill="rgb(90,175,245)"/>
<rect x="388.5" y="651" width="103.5" height="62.5" fill="rgb(0,130,228)"/>
<text x="415" y="674" style='font-family:"Liberation Mono", monospace;font-size:18.5px;letter-spacing:1.0px;font-weight:bold' fill="rgb(0,28,95)" >Type</text>
<rect x="409.5" y="685" width="59.5" height="24" fill="rgb(228,228,230)"/>
<text x="409.7" y="703" style='font-family:"Liberation Mono", monospace;font-size:18.5px;letter-spacing:1.0px;font-weight:normal' fill="#000" >Image</text>
<rect x="717" y="649" width="107" height="67.5" rx="2" fill="rgb(0,60,140)"/>
<rect x="717" y="649" width="104" height="64.5" rx="2" fill="rgb(90,175,245)"/>
<rect x="718.5" y="651" width="102.5" height="62.5" fill="rgb(0,130,228)"/>
<text x="744.5" y="689" style='font-family:"Liberation Mono", monospace;font-size:18.5px;letter-spacing:1.3px;font-weight:normal' fill="rgb(0,28,95)" >Save</text>
</svg>
</body></html>
